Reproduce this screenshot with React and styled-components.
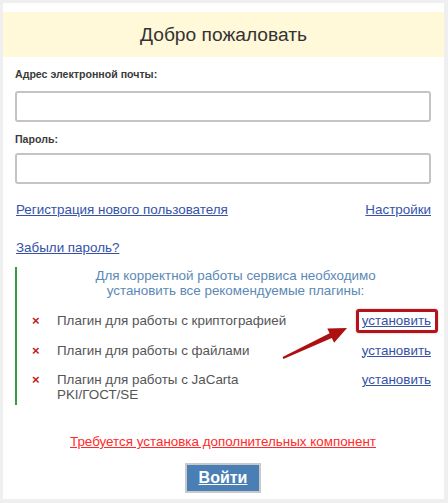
import React from "react";
import styled, { createGlobalStyle } from "styled-components";

const GlobalStyle = createGlobalStyle`
  html, body { margin: 0; padding: 0; background: #efefef; }
  body { font-family: "Liberation Sans", Arial, sans-serif; }
  * { box-sizing: border-box; }
`;

const Page = styled.div`
  min-height: 503px;
  padding: 3px 4px 4px 3px;
  background: #efefef;
  display: flex;
  flex-direction: column;
`;

const Card = styled.div`
  flex: 1;
  background: #ffffff;
  padding-top: 9px;
  display: flex;
  flex-direction: column;
`;

const Header = styled.div`
  height: 45px;
  background: #fff8d9;
  display: flex;
  align-items: center;
  justify-content: center;
`;

const Title = styled.h1`
  margin: 0;
  font-size: 19.2px;
  font-weight: normal;
  color: #333;
  line-height: 24px;
`;

const Form = styled.div`
  padding: 0 13px 0 12px;
  display: flex;
  flex-direction: column;
`;

const Label = styled.label`
  display: block;
  margin-top: 11px;
  font-size: 10.6px;
  line-height: 13px;
  font-weight: bold;
  color: #3a3a3a;
`;

const Input = styled.input`
  display: block;
  width: 100%;
  height: 31px;
  margin-top: ${(p) => p.$mt}px;
  border: 2px solid #c4c4c4;
  border-radius: 3px;
  background: #fff;
  outline: none;
`;

const LinksRow = styled.div`
  display: flex;
  justify-content: space-between;
  margin-top: ${(p) => p.$mt}px;
  padding-left: 1px;
`;

const Link = styled.a`
  font-size: 13.4px;
  line-height: 15px;
  color: ${(p) => p.$color || "#3552a8"};
  text-decoration: underline;
  cursor: pointer;
`;

const PluginBox = styled.div`
  position: relative;
  margin-top: 12px;
  border-left: 2px solid #2f9e47;
  padding: 1px 0 3px 15px;
`;

const Info = styled.div`
  padding-left: 8px;
  text-align: center;
  font-size: 13.4px;
  line-height: 15px;
  color: #5c88b5;
`;

const PluginList = styled.div`
  margin-top: 15px;
  display: flex;
  flex-direction: column;
  gap: 14.5px;
`;

const PluginRow = styled.div`
  display: grid;
  grid-template-columns: 25px 234px 1fr;
  align-items: start;
  font-size: 13.4px;
  line-height: 15px;
`;

const Cross = styled.span`
  color: #c0201a;
  font-weight: bold;
  font-size: 13px;
  line-height: 15px;
`;

const PluginName = styled.span`
  color: #555;
`;

const NoWrap = styled.span`
  white-space: nowrap;
`;

const InstallCell = styled.div`
  justify-self: end;
`;

const Highlight = styled.span`
  position: relative;
  display: inline-block;
  &::after {
    content: "";
    position: absolute;
    top: -4px;
    bottom: -5px;
    left: -6px;
    right: -7px;
    border: 3px solid #b3131b;
    border-radius: 3px;
    box-shadow: 0 0 2px rgba(120, 0, 0, 0.4);
    pointer-events: none;
  }
`;

const Arrow = styled.svg`
  position: absolute;
  left: 262px;
  top: 55px;
  width: 90px;
  height: 45px;
  overflow: visible;
  pointer-events: none;
`;

const Warning = styled.div`
  margin-top: 27px;
  text-align: center;
`;

const ButtonRow = styled.div`
  margin-top: 13px;
  display: flex;
  justify-content: center;
`;

const Button = styled.button`
  width: 76px;
  height: 30px;
  padding: 0;
  border: 2px solid #c9c9c9;
  background: #4a7fb6;
  color: #fff;
  font-family: "Liberation Sans", Arial, sans-serif;
  font-size: 16px;
  font-weight: bold;
  text-decoration: underline;
  cursor: pointer;
`;

const plugins = [
  { id: "crypto", name: "Плагин для работы с криптографией", highlight: true },
  { id: "files", name: "Плагин для работы с файлами" },
  {
    id: "jacarta",
    name: (
      <>
        Плагин для работы с JaCarta <NoWrap>PKI/ГОСТ/SE</NoWrap>
      </>
    ),
  },
];

export default function App() {
  return (
    <>
      <GlobalStyle />
      <Page>
        <Card>
          <Header>
            <Title>Добро пожаловать</Title>
          </Header>
          <Form>
            <Label>Адрес электронной почты:</Label>
            <Input type="text" $mt={10} />
            <Label>Пароль:</Label>
            <Input type="password" $mt={7} />
            <LinksRow $mt={18}>
              <Link>Регистрация нового пользователя</Link>
              <Link>Настройки</Link>
            </LinksRow>
            <LinksRow $mt={23}>
              <Link>Забыли пароль?</Link>
            </LinksRow>
            <PluginBox>
              <Info>
                Для корректной работы сервиса необходимо
                <br />
                установить все рекомендуемые плагины:
              </Info>
              <PluginList>
                {plugins.map((p) => (
                  <PluginRow key={p.id}>
                    <Cross>×</Cross>
                    <PluginName>{p.name}</PluginName>
                    <InstallCell>
                      {p.highlight ? (
                        <Highlight>
                          <Link>установить</Link>
                        </Highlight>
                      ) : (
                        <Link>установить</Link>
                      )}
                    </InstallCell>
                  </PluginRow>
                ))}
              </PluginList>
              <Arrow viewBox="0 0 90 45">
                <polygon
                  points="3.6,35.1 50.6,11.3 48.3,6.4 68,6 55.1,20.8 52.8,15.9 4.4,36.9"
                  fill="#ac1010"
                />
              </Arrow>
            </PluginBox>
            <Warning>
              <Link $color="#ff2b2b">Требуется установка дополнительных компонент</Link>
            </Warning>
            <ButtonRow>
              <Button>Войти</Button>
            </ButtonRow>
          </Form>
        </Card>
      </Page>
    </>
  );
}
